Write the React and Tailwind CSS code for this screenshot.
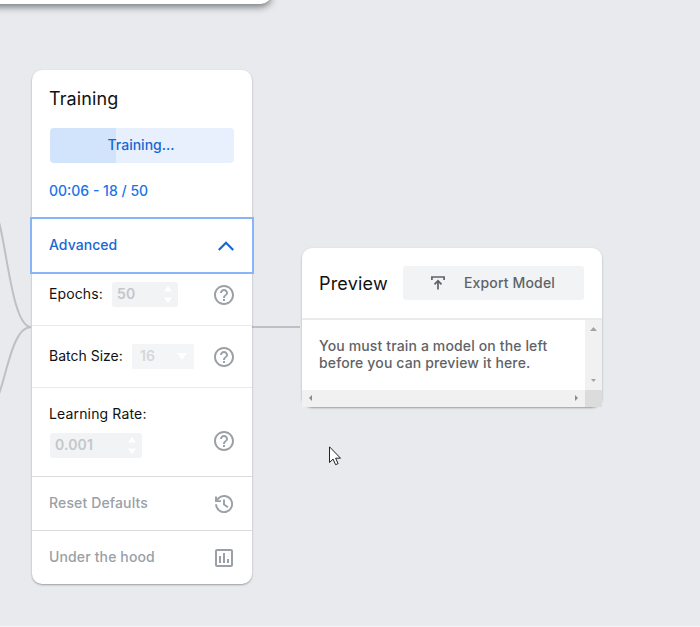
import React from "react";
import { MdHelpOutline, MdOutlineAssessment } from "react-icons/md";

function Help() {
  return <MdHelpOutline className="size-6 shrink-0 text-[#9aa0a6]" />;
}

function RestoreIcon() {
  return (
    <svg className="mr-[3px]" width="18" height="18" viewBox="0 0 18 18" fill="none" stroke="#9aa0a6" strokeWidth="1.9">
      <path d="M1 9.200a8.050 8.050 0 1 0 2.200-5.700L1.600 5.300" />
      <path d="M1 1.600v4.500h5M9 4.500v5l3.900 2.700" />
    </svg>
  );
}

function Spinner() {
  return (
    <svg width="8" height="18" viewBox="0 0 8 18" fill="#fff">
      <path d="M0 5.5 4 0l4 5.5zM0 11.5h8L4 17z" />
    </svg>
  );
}

function NumberField({ value, className }) {
  return (
    <div className={`flex h-[25px] items-center justify-between rounded-[3px] bg-[#f1f3f4] pl-[5px] pr-1.5 text-[#c4c7ca] ${className}`}>
      <span className="pb-0.5 text-[14px] font-semibold leading-[23px] tracking-[0.15px]">{value}</span>
      <Spinner />
    </div>
  );
}

function Wires() {
  return (
    <svg className="absolute left-0 top-0" width="700" height="627" fill="none" stroke="#bdc1c6" strokeWidth="2">
      <path d="M-1 222 0 226C8 260 14 327 31 327" />
      <path d="M-1 394 0 391C8 367 14 327 31 327" />
      <path d="M252 327H300" />
    </svg>
  );
}

function TrainingCard() {
  return (
    <section className="absolute left-8 top-[70px] flex h-[514px] w-[220px] flex-col rounded-[10px] bg-white shadow-[0_1px_2px_rgba(60,64,67,0.45)]">
      <div className="h-[148px] shrink-0 px-[18px] pt-[17px]">
        <h2 className="-ml-px text-[18px] leading-6 tracking-[0.1px] text-[#111]">Training</h2>
        <div className="mt-[17px] flex h-[35px] items-center justify-center rounded-[4px] bg-[linear-gradient(90deg,#d2e3fc_66px,#e8f0fe_66px)] pb-0.5 text-[14px] font-medium text-[#1967d2]">
          <span className="-ml-0.5">Training...</span>
        </div>
        <div className="-ml-px mt-[18px] text-[14px] font-medium leading-5 text-[#1a73e8]">00:06 - 18 / 50</div>
      </div>
      <div className="-mx-0.5 -mt-px flex h-[57px] shrink-0 items-center justify-between border-2 border-[#8ab4f8] pl-[17px] pr-[18px] text-[14px] font-medium text-[#1967d2]">
        <span className="pb-0.5 tracking-[0.05px]">Advanced</span>
        <svg width="16" height="10" viewBox="0 0 16 10" fill="none" stroke="#1967d2" strokeWidth="2.2">
          <path d="m.8 9 7.2-7.2L15.200 9" />
        </svg>
      </div>
      <div className="flex h-[52px] shrink-0 items-center border-b border-[#e8eaed] pb-2.5 pl-[17px] pr-4 text-[14px] text-[#111]">
        <span className="w-[63px] pb-0.5 tracking-[0.1px]">Epochs:</span>
        <NumberField value="50" className="w-[66px]" />
        <span className="ml-auto"><Help /></span>
      </div>
      <div className="flex h-[62px] shrink-0 items-center border-b border-[#e8eaed] pl-[17px] pr-4 text-[14px] text-[#111]">
        <span className="w-[83px] whitespace-nowrap pb-0.5">Batch Size:</span>
        <div className="flex h-[25px] w-[62px] items-center justify-between bg-[#f4f5f6] pl-2 pr-[7px] font-semibold text-[#d5d7d9]">
          <span className="pb-0.5">16</span>
          <svg width="10" height="7" fill="#fff"><path d="M0 0h10L5 7z" /></svg>
        </div>
        <span className="ml-auto"><Help /></span>
      </div>
      <div className="flex h-[89px] shrink-0 justify-between border-b border-[#dadce0] pl-[18px] pr-4 pt-4 text-[14px] text-[#111]">
        <div>
          <div className="-ml-px leading-5 tracking-[0.15px]">Learning Rate:</div>
          <NumberField value="0.001" className="mt-[9px] w-[92px]" />
        </div>
        <span className="mt-[25px]"><Help /></span>
      </div>
      <div className="flex h-[54px] shrink-0 items-center justify-between border-b border-[#dadce0] pl-[17px] pr-4 text-[14px] font-medium text-[#9aa0a6]">
        <span className="pb-0.5 tracking-[0.14px]">Reset Defaults</span>
        <RestoreIcon />
      </div>
      <div className="flex h-[53px] shrink-0 items-center justify-between pl-[17px] pr-4 text-[14px] font-medium text-[#9aa0a6]">
        <span className="pb-0.5 tracking-[0.14px]">Under the hood</span>
        <MdOutlineAssessment className="size-6" />
      </div>
    </section>
  );
}

function PreviewCard() {
  return (
    <section className="absolute left-[302px] top-[248px] flex h-[159px] w-[300px] flex-col rounded-[10px] bg-white shadow-[0_1px_2px_rgba(60,64,67,0.45)]">
      <header className="flex h-[72px] shrink-0 items-center border-b-2 border-[#e8eaed] pl-[17px] pr-[18px]">
        <h2 className="w-[84px] pt-px text-[18px] leading-6 tracking-[0.2px] text-[#111]">Preview</h2>
        <div className="flex h-[34px] flex-1 items-center rounded-[3px] bg-[#f1f3f4] pl-7 text-[14px] font-medium text-[#5f6368]">
          <svg width="14" height="14" viewBox="0 0 14 14" fill="none" stroke="#5f6368" strokeWidth="1.7">
            <path d="M.9 4V1h12.200v3M7 13.500V5M3.500 8.300 7 4.800l3.500 3.500" />
          </svg>
          <span className="ml-[19px] pb-0.5 tracking-[0.15px]">Export Model</span>
        </div>
      </header>
      <div className="flex h-[70px] shrink-0">
        <p className="flex-1 whitespace-nowrap pl-[17px] pt-[17px] text-[14px] font-medium leading-[17px] tracking-[0.14px] text-[#5f6368]">
          You must train a model on the left<br />before you can preview it here.
        </p>
        <div className="flex w-[17px] flex-col items-center justify-between bg-[#f1f1f1] pb-2 pt-[7px]">
          <svg width="7" height="4" fill="#a3a3a3"><path d="M0 4 3.500 0 7 4z" /></svg>
          <svg width="5" height="3" fill="#a3a3a3"><path d="M0 0h5L2.500 3z" /></svg>
        </div>
      </div>
      <div className="flex h-[17px] shrink-0">
        <div className="flex flex-1 items-center justify-between bg-[#f1f1f1] pb-px pl-[7px] pr-[7px]">
          <svg width="3" height="6" fill="#8b8b8b"><path d="M3 0v6L0 3z" /></svg>
          <svg width="3" height="6" fill="#8b8b8b"><path d="M0 0v6l3-3z" /></svg>
        </div>
        <div className="w-[17px] bg-[#dcdcdc]" />
      </div>
    </section>
  );
}

export default function App() {
  return (
    <main className="relative h-[627px] w-[700px] overflow-hidden border-b border-[#f4f5f7] bg-[#e8eaed] font-['Inter',sans-serif]">
      <div className="absolute -left-5 -top-10 h-[44px] w-[291px] rounded-[10px] bg-white shadow-[0_3px_7px_rgba(60,64,67,0.65)]" />
      <Wires />
      <TrainingCard />
      <PreviewCard />
      <svg className="absolute left-[329px] top-[446px]" width="13" height="20" viewBox="0 0 13 20" fill="#fff" stroke="#222" strokeWidth="1">
        <path d="M.5.8v15.700l3.600-3.400 2.500 5.600 2.500-1.100-2.500-5.400h4.900z" />
      </svg>
    </main>
  );
}
